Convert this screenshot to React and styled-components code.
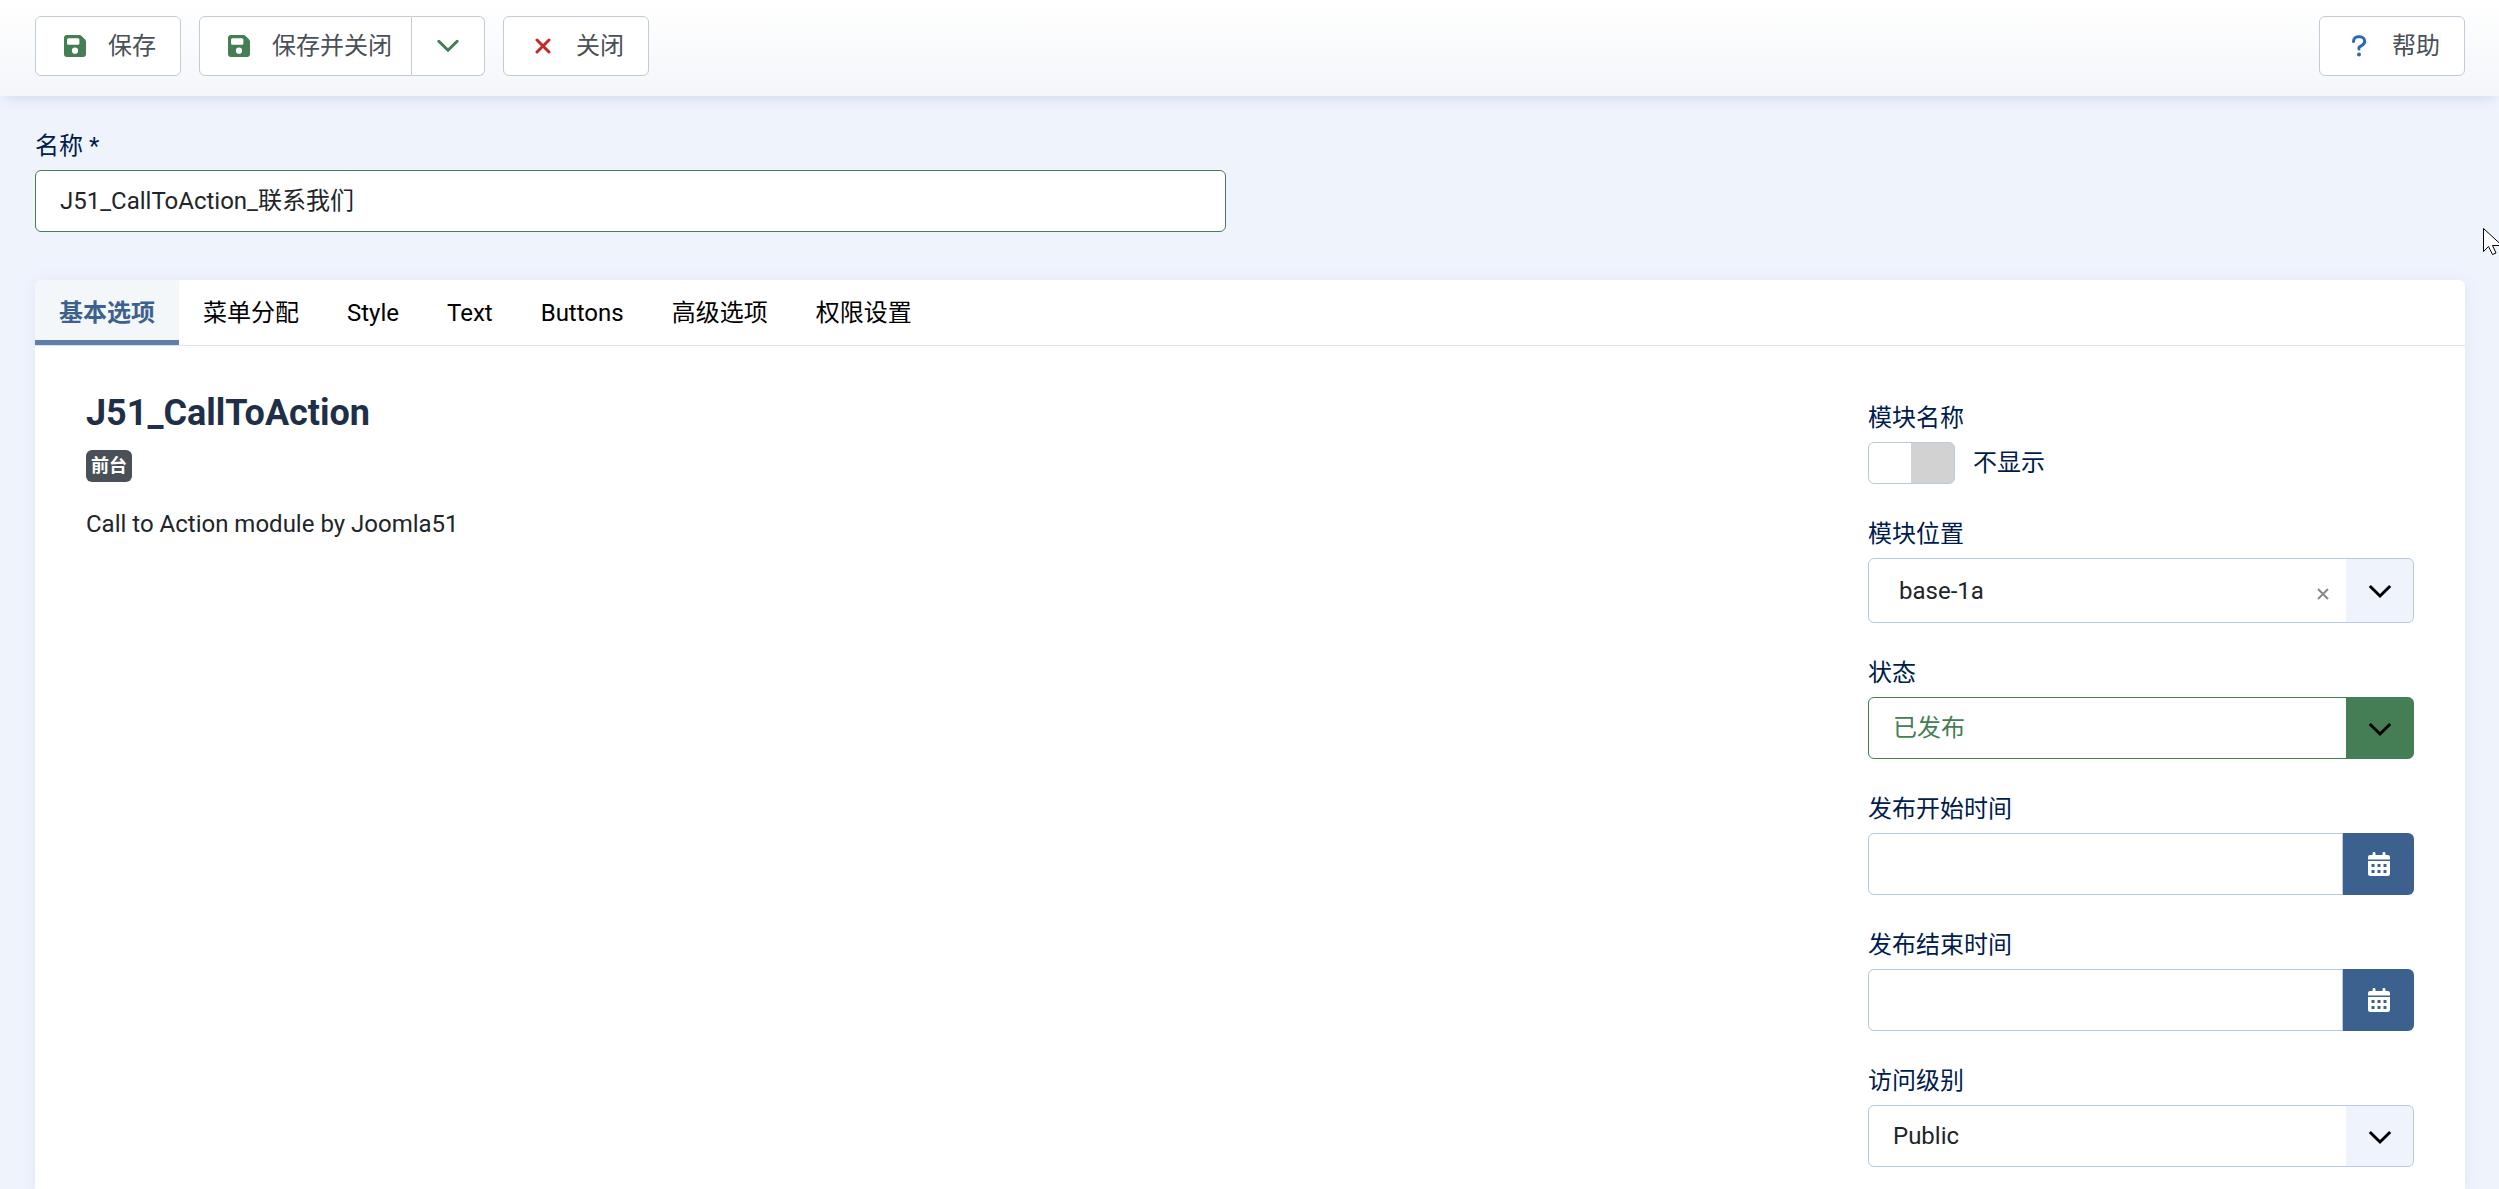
import React, { useState } from 'react';
import styled, { createGlobalStyle, css } from 'styled-components';

const GlobalStyle = createGlobalStyle`
  *, *::before, *::after { box-sizing: border-box; }
  body {
    margin: 0;
    background: #eff3fc;
    color: #212529;
    font-family: Roboto, "Noto Sans CJK SC", sans-serif;
    font-size: 24px;
    line-height: 36px;
  }
  button, input, select { font: inherit; color: inherit; }
`;

const Page = styled.div`
  min-height: 100vh;
  display: flex;
  flex-direction: column;
`;

const Toolbar = styled.header`
  display: flex;
  gap: 18px;
  padding: 16px 34px 20px 35px;
  background: linear-gradient(#fff, #f4f6fa);
  box-shadow: 0 6px 12px -4px #cddaee;
`;

const buttonFrame = css`
  border: 1px solid #c3cad9;
  border-radius: 6px;
  background: #fff;
  color: #495057;
`;

const ToolButton = styled.button`
  ${buttonFrame}
  display: flex;
  align-items: center;
  gap: 18px;
  height: 60px;
  padding: 0 24px;
  margin-left: ${(p) => (p.$end ? 'auto' : '0')};
  ${(p) => p.$joined && css`
    padding-right: 19px;
    border-radius: 6px 0 0 6px;
  `}
`;

const ButtonGroup = styled.div`
  display: flex;
`;

const MenuButton = styled.button`
  ${buttonFrame}
  display: flex;
  align-items: center;
  justify-content: center;
  width: 73px;
  padding: 0;
  border-left: 0;
  border-radius: 0 6px 6px 0;
`;

const IconBox = styled.span`
  display: flex;
  justify-content: center;
  width: 30px;
  color: ${(p) => p.$color};
`;

const Main = styled.main`
  flex: 1;
  display: flex;
  flex-direction: column;
  padding: 32px 34px 0 35px;
`;

const TitleRow = styled.div`
  display: grid;
  grid-template-columns: 1fr 1fr;
  gap: 48px;
  margin-bottom: 48px;
`;

const Field = styled.div`
  display: flex;
  flex-direction: column;
  gap: 6px;
`;

const Label = styled.label`
  color: #001b4c;
`;

const TextInput = styled.input`
  flex: 1;
  min-width: 0;
  width: 100%;
  min-height: 62px;
  padding: 0 24px;
  border: 1px solid ${(p) => (p.$valid ? '#457d54' : '#b8c8e0')};
  border-radius: ${(p) => (p.$joined ? '6px 0 0 6px' : '6px')};
  background: #fff;
  outline: 0;
`;

const Card = styled.section`
  flex: 1;
  border-radius: 6px 6px 0 0;
  background: #fff;
  box-shadow: 0 2px 16px #dfe7f5;
`;

const TabList = styled.div`
  display: flex;
  border-bottom: 1px solid #d9e3f0;
  overflow: hidden;
  border-radius: 6px 6px 0 0;
`;

const Tab = styled.button`
  height: 65px;
  padding: 0 24px;
  border: 0;
  background: ${(p) => (p.$active ? '#f3f7fa' : 'transparent')};
  color: ${(p) => (p.$active ? '#3c618f' : '#000')};
  font-weight: ${(p) => (p.$active ? 700 : 400)};
  box-shadow: ${(p) => (p.$active ? 'inset 0 -5px #5f7fa8' : 'none')};
`;

const Panel = styled.div`
  display: flex;
  justify-content: space-between;
  gap: 48px;
  padding: 46px 51px 20px;
`;

const Summary = styled.div`
  display: flex;
  flex-direction: column;
  align-items: flex-start;
`;

const Heading = styled.h2`
  margin: 0 0 15px;
  color: #1f2f48;
  font-size: 36px;
  line-height: 43px;
  font-weight: 700;
`;

const Badge = styled.span`
  padding: 0 5px;
  border-radius: 6px;
  background: #495057;
  color: #fff;
  font-size: 18px;
  line-height: 32px;
  font-weight: 700;
`;

const Description = styled.p`
  margin: 24px 0 0;
`;

const Sidebar = styled.div`
  display: flex;
  flex-direction: column;
  flex: 0 1 546px;
  gap: 32px;
  padding-top: 8px;
`;

const SwitchRow = styled.label`
  display: flex;
  align-items: center;
  gap: 18px;
  color: #001b4c;
`;

const Switch = styled.input`
  appearance: none;
  width: 87px;
  height: 42px;
  margin: 0;
  border: 1px solid #b8c8e0;
  border-radius: 6px;
  background: linear-gradient(${(p) => (p.checked ? '270deg' : '90deg')}, #fff 50%, #d2d2d2 50%);
`;

const Control = styled.div`
  display: flex;
  position: relative;
`;

const Select = styled.select`
  appearance: none;
  width: 100%;
  height: ${(p) => (p.$clearable ? '65px' : '62px')};
  padding: 0 96px 0 ${(p) => (p.$clearable ? '30px' : '24px')};
  border: 1px solid ${(p) => (p.$success ? '#457d54' : '#b8c8e0')};
  border-radius: 6px;
  background: linear-gradient(${(p) => (p.$success ? '#457d54, #457d54' : '#eff3fc, #eff3fc')}) right / 67px 100% no-repeat #fff;
  color: ${(p) => (p.$success ? '#457d54' : '#212529')};
`;

const SelectArrow = styled.span`
  position: absolute;
  top: 0;
  bottom: 0;
  right: 0;
  width: 69px;
  padding-top: 3px;
  display: flex;
  align-items: center;
  justify-content: center;
  color: #000;
  pointer-events: none;
`;

const ClearButton = styled.button`
  position: absolute;
  top: 6px;
  bottom: 0;
  right: 81px;
  display: flex;
  align-items: center;
  padding: 4px;
  border: 0;
  background: none;
  color: #868a8f;
`;

const DateButton = styled.button`
  display: flex;
  align-items: center;
  justify-content: center;
  width: 71px;
  border: 0;
  border-radius: 0 6px 6px 0;
  background: #3c618f;
  color: #fff;
`;

const Pointer = styled.svg`
  position: fixed;
  top: 228px;
  right: 0;
  pointer-events: none;
`;

const SaveIcon = () => (
  <svg width="22" height="22" viewBox="0 0 22 22" fill="currentColor" fillRule="evenodd" aria-hidden="true">
    <path d="M3 0h12.500c.8 0 1.500.3 2.100.9l3.500 3.500c.6.600.9 1.300.9 2.100V19a3 3 0 0 1-3 3H3a3 3 0 0 1-3-3V3a3 3 0 0 1 3-3zM4.500 3.200A1.500 1.500 0 0 0 3 4.700v3.600a1.500 1.500 0 0 0 1.500 1.500h9.400a1.500 1.500 0 0 0 1.500-1.500V4.700a1.500 1.500 0 0 0-1.500-1.500zM11 12.600a3.100 3.100 0 1 0 0 6.200 3.100 3.100 0 0 0 0-6.200z" />
  </svg>
);

const CloseIcon = () => (
  <svg width="16" height="16" viewBox="0 0 16 16" fill="none" stroke="currentColor" strokeWidth="3" strokeLinecap="round" aria-hidden="true">
    <path d="M2 2 14 14M14 2 2 14" />
  </svg>
);

const HelpIcon = () => (
  <svg width="16" height="22" viewBox="0 0 16 22" fill="none" stroke="currentColor" strokeWidth="3" strokeLinecap="round" strokeLinejoin="round" aria-hidden="true">
    <path d="M2.500 6.500C2.500 3.500 4.500 1.800 7 1.800h1.800c2.700 0 4.900 2 4.900 4.500 0 2-1 3.100-2.700 4.100L8 12.200v1.800" />
    <circle cx="8" cy="19.500" r="2" fill="currentColor" stroke="none" />
  </svg>
);

const CalendarIcon = () => (
  <svg width="22" height="24" viewBox="0 0 22 24" fill="currentColor" fillRule="evenodd" aria-hidden="true">
    <path d="M2.200 3H4.600V1.400a1.400 1.400 0 0 1 2.900 0V3h7V1.400a1.400 1.400 0 0 1 2.900 0V3h2.400A2.200 2.200 0 0 1 22 5.200V7.500H0V5.200A2.200 2.200 0 0 1 2.200 3zM0 9h22v12.800a2.200 2.200 0 0 1-2.200 2.200H2.200A2.200 2.200 0 0 1 0 21.800zM3.500 12v3h3v-3zM9.500 12v3h3v-3zM15.500 12v3h3v-3zM3.500 18v3h3v-3zM9.500 18v3h3v-3zM15.500 18v3h3v-3z" />
  </svg>
);

const Chevron = ({ rounded }) => (
  <svg width="24" height="16" viewBox="0 0 24 16" fill="none" stroke="currentColor" strokeWidth="3" strokeLinecap={rounded ? 'round' : 'butt'} strokeLinejoin={rounded ? 'round' : 'miter'} aria-hidden="true">
    <path d={rounded ? 'M2.800 3.300 12 12.300 21.200 3.300' : 'M1.800 2 12 12 22.200 2'} />
  </svg>
);

const SelectField = ({ id, label, options, success, clearable }) => (
  <Field>
    <Label htmlFor={id}>{label}</Label>
    <Control>
      <Select id={id} $success={success} $clearable={clearable}>
        {options.map((option) => <option key={option}>{option}</option>)}
      </Select>
      {clearable && (
        <ClearButton type="button" aria-label="Clear">
          <svg width="12" height="12" viewBox="0 0 12 12" stroke="currentColor" strokeWidth="2"><path d="m1 1 10 10M11 1 1 11" /></svg>
        </ClearButton>
      )}
      <SelectArrow><Chevron /></SelectArrow>
    </Control>
  </Field>
);

const DateField = ({ id, label }) => (
  <Field>
    <Label htmlFor={id}>{label}</Label>
    <Control>
      <TextInput id={id} type="text" $joined />
      <DateButton type="button" aria-label={label}><CalendarIcon /></DateButton>
    </Control>
  </Field>
);

const TABS = ['基本选项', '菜单分配', 'Style', 'Text', 'Buttons', '高级选项', '权限设置'];

export default function App() {
  const [tab, setTab] = useState(TABS[0]);
  const [name, setName] = useState('J51_CallToAction_联系我们');
  const [showTitle, setShowTitle] = useState(false);

  return (
    <>
      <GlobalStyle />
      <Page>
        <Toolbar>
          <ToolButton type="button"><IconBox $color="#457d54"><SaveIcon /></IconBox>保存</ToolButton>
          <ButtonGroup>
            <ToolButton type="button" $joined><IconBox $color="#457d54"><SaveIcon /></IconBox>保存并关闭</ToolButton>
            <MenuButton type="button" aria-label="保存"><IconBox $color="#457d54"><Chevron rounded /></IconBox></MenuButton>
          </ButtonGroup>
          <ToolButton type="button"><IconBox $color="#c52827"><CloseIcon /></IconBox>关闭</ToolButton>
          <ToolButton type="button" $end><IconBox $color="#2a69b8"><HelpIcon /></IconBox>帮助</ToolButton>
        </Toolbar>
        <Main>
          <TitleRow>
            <Field>
              <Label htmlFor="name">名称 *</Label>
              <TextInput id="name" $valid value={name} onChange={(e) => setName(e.target.value)} />
            </Field>
          </TitleRow>
          <Card>
            <TabList role="tablist">
              {TABS.map((item) => (
                <Tab key={item} type="button" role="tab" aria-selected={item === tab} $active={item === tab} onClick={() => setTab(item)}>
                  {item}
                </Tab>
              ))}
            </TabList>
            <Panel role="tabpanel">
              <Summary>
                <Heading>J51_CallToAction</Heading>
                <Badge>前台</Badge>
                <Description>Call to Action module by Joomla51</Description>
              </Summary>
              <Sidebar>
                <Field>
                  <Label htmlFor="show-title">模块名称</Label>
                  <SwitchRow>
                    <Switch id="show-title" type="checkbox" role="switch" checked={showTitle} onChange={(e) => setShowTitle(e.target.checked)} />
                    {showTitle ? '显示' : '不显示'}
                  </SwitchRow>
                </Field>
                <SelectField id="position" label="模块位置" options={['base-1a']} clearable />
                <SelectField id="status" label="状态" options={['已发布']} success />
                <DateField id="publish-up" label="发布开始时间" />
                <DateField id="publish-down" label="发布结束时间" />
                <SelectField id="access" label="访问级别" options={['Public']} />
              </Sidebar>
            </Panel>
          </Card>
        </Main>
      </Page>
      <Pointer width="16" height="28" viewBox="0 0 16 28" fill="#fff" stroke="#000" aria-hidden="true">
        <path d="M.5.5v23l5-5 4 8 3.500-1.500-3.500-7.500h9.500z" />
      </Pointer>
    </>
  );
}
